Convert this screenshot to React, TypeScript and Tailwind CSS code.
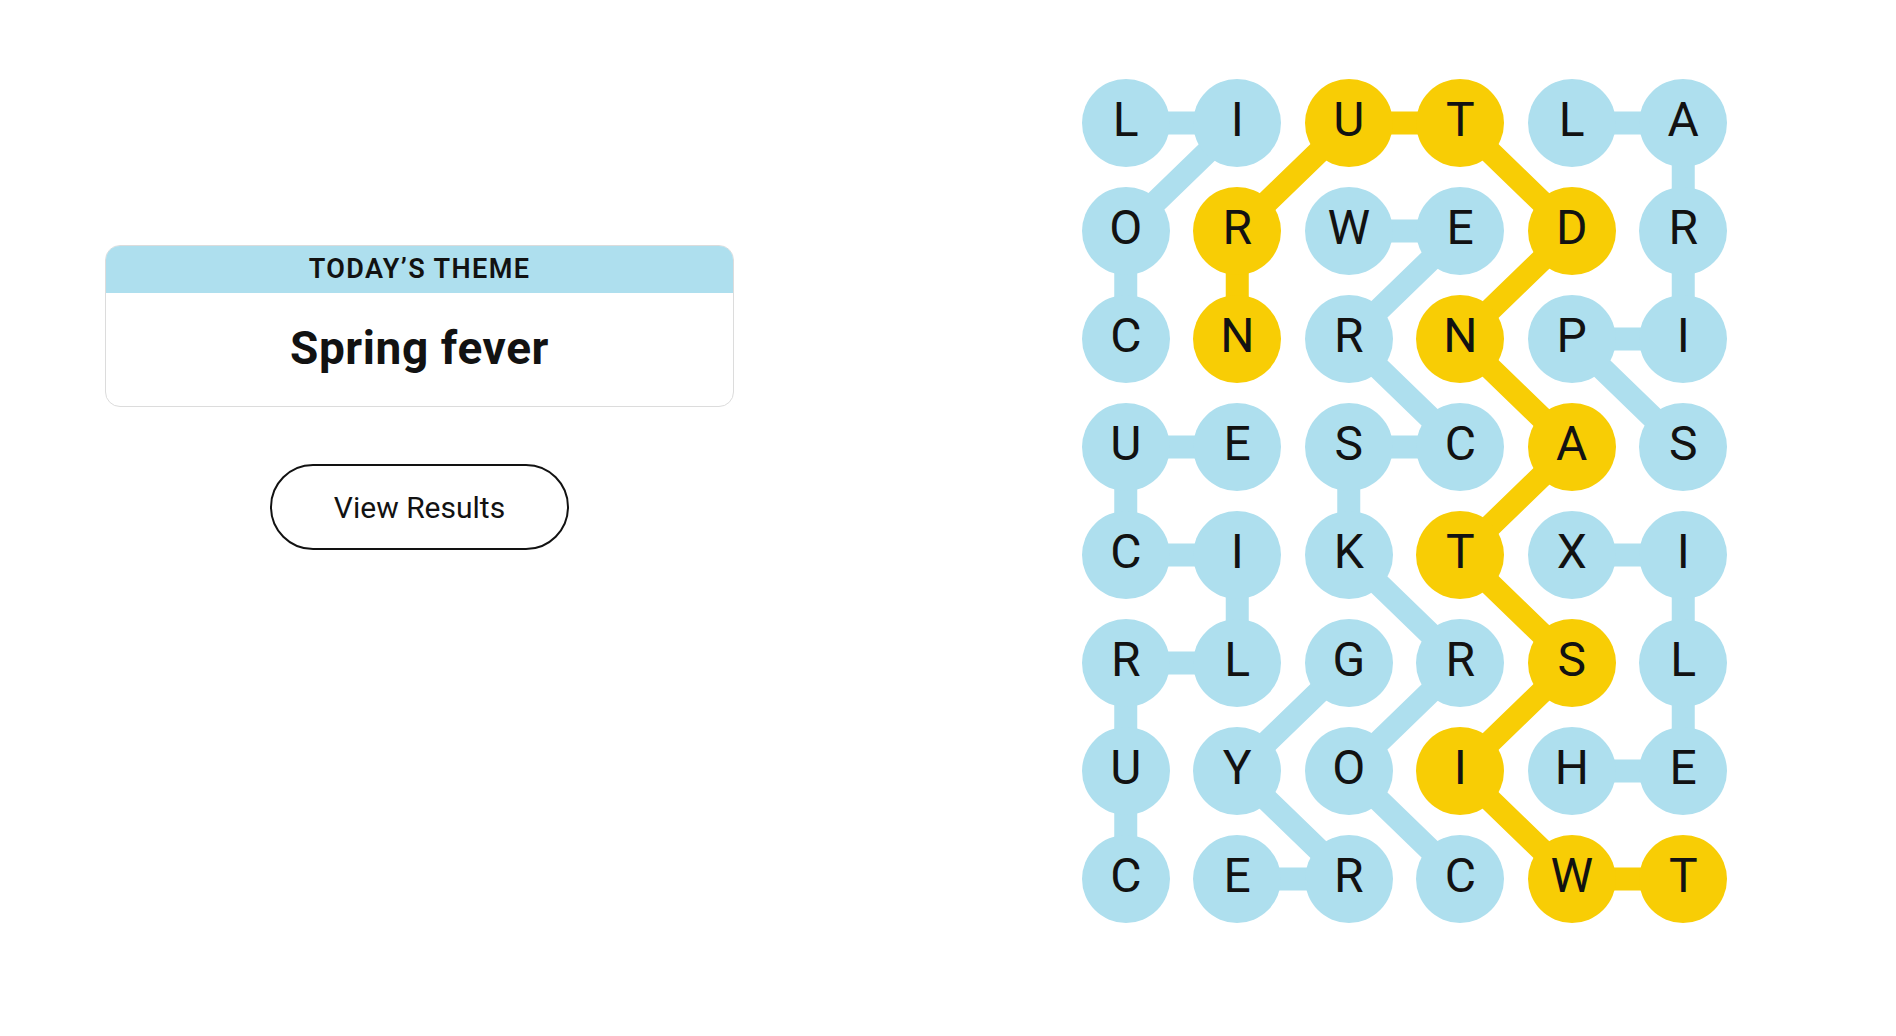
import React from "react";

const GRID = [
  "LIUTLA",
  "ORWEDR",
  "CNRNPI",
  "UESCAS",
  "CIKTXI",
  "RLGRSL",
  "UYOIHE",
  "CERCWT",
];

type P = [number, number];

const BLUE_WORDS: P[][] = [
  // COIL
  [[2, 0], [1, 0], [0, 1], [0, 0]],
  // SPIRAL
  [[3, 5], [2, 4], [2, 5], [1, 5], [0, 5], [0, 4]],
  // CORKSCREW
  [[7, 3], [6, 2], [5, 3], [4, 2], [3, 2], [3, 3], [2, 2], [1, 3], [1, 2]],
  // CURLICUE
  [[7, 0], [6, 0], [5, 0], [5, 1], [4, 1], [4, 0], [3, 0], [3, 1]],
  // HELIX
  [[6, 4], [6, 5], [5, 5], [4, 5], [4, 4]],
  // GYRE
  [[5, 2], [6, 1], [7, 2], [7, 1]],
];

const SPANGRAM: P[] = [
  [7, 5], [7, 4], [6, 3], [5, 4], [4, 3], [3, 4], [2, 3], [1, 4], [0, 3], [0, 2], [1, 1], [2, 1],
];

const CW = 111.5;
const RH = 108;
const cx = (c: number) => CW / 2 + CW * c;
const cy = (r: number) => RH / 2 + RH * r;

const yellowSet = new Set(SPANGRAM.map(([r, c]) => `${r}-${c}`));

function Path({ pts, color }: { pts: P[]; color: string }) {
  const d = pts.map(([r, c], i) => `${i === 0 ? "M" : "L"}${cx(c)} ${cy(r)}`).join(" ");
  return <path d={d} stroke={color} strokeWidth={23} fill="none" strokeLinejoin="round" />;
}

export default function App() {
  return (
    <div className="w-[1896px] h-[1036px] bg-white flex items-start" style={{ fontFamily: "Roboto, 'Liberation Sans', sans-serif" }}>
      <div className="ml-[105px] mt-[245px] w-[629px] flex flex-col items-center">
        <div className="w-full rounded-[15px] border border-[#dcdcdc] overflow-hidden">
          <div className="h-[47px] bg-[#aedfee] flex items-center justify-center text-[27px] font-semibold tracking-[1.4px] text-[#121212]">
            TODAY’S THEME
          </div>
          <div className="h-[113px] flex items-center justify-center text-[46px] font-bold text-[#121212] tracking-[0.6px] pb-[2px]">
            Spring fever
          </div>
        </div>
        <button className="mt-[57px] w-[299px] h-[86px] rounded-full border-2 border-[#121212] bg-white text-[30px] text-[#121212] flex items-center justify-center">
          View Results
        </button>
      </div>
      <div className="ml-[336px] mt-[69px] relative w-[669px] h-[864px]">
        <svg className="absolute inset-0" width={669} height={864} viewBox="0 0 669 864">
          {BLUE_WORDS.map((w, i) => (
            <Path key={i} pts={w} color="#aedfee" />
          ))}
          <Path pts={SPANGRAM} color="#f8cd05" />
        </svg>
        <div className="relative grid grid-cols-6">
          {GRID.map((row, r) =>
            row.split("").map((ch, c) => (
              <div key={`${r}-${c}`} className="h-[108px] flex items-center justify-center">
                <div
                  className={
                    yellowSet.has(`${r}-${c}`)
                      ? "w-[88px] h-[88px] rounded-full bg-[#f8cd05] flex items-center justify-center text-[48px] leading-none text-[#121212] pb-[6px]"
                      : "w-[88px] h-[88px] rounded-full bg-[#aedfee] flex items-center justify-center text-[48px] leading-none text-[#121212] pb-[6px]"
                  }
                >
                  {ch}
                </div>
              </div>
            ))
          )}
        </div>
      </div>
    </div>
  );
}
